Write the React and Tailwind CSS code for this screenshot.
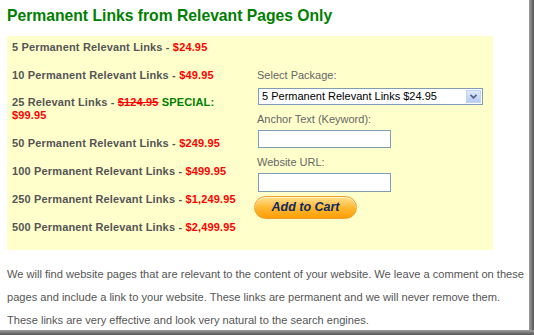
import React from "react";

const items = [
  { label: "5 Permanent Relevant Links", price: "$24.95" },
  { label: "10 Permanent Relevant Links", price: "$49.95" },
  { special: true },
  { label: "50 Permanent Relevant Links", price: "$249.95" },
  { label: "100 Permanent Relevant Links", price: "$499.95" },
  { label: "250 Permanent Relevant Links", price: "$1,249.95" },
  { label: "500 Permanent Relevant Links", price: "$2,499.95" },
];

export default function App() {
  return (
    <div className="w-[534px] h-[335px] flex flex-col bg-white font-['Liberation_Sans',Arial,sans-serif] overflow-hidden">
      <div className="flex flex-1 min-h-0">
        <div className="w-[529px] px-[7px] pt-[7px] overflow-hidden">
          <h1 className="text-[15.7px] leading-[18px] font-bold text-[#008000]">
            Permanent Links from Relevant Pages Only
          </h1>
          <div className="mt-[11px] w-[486px] h-[214px] bg-[#ffffcc] flex">
            <div className="w-[243px] shrink-0 pl-[5px] pt-[4px] flex flex-col gap-[14px] text-[11px] font-bold text-[#555555] tracking-[0.15px]">
              {items.map((it, i) =>
                it.special ? (
                  <div key={i} className="leading-[13px]">
                    25 Relevant Links - <span className="text-[#ff0000] line-through">$124.95</span>{" "}
                    <span className="text-[#008000]">SPECIAL:</span>{" "}
                    <span className="text-[#ff0000]">$99.95</span>
                  </div>
                ) : (
                  <div key={i} className="leading-[14px]">
                    {it.label} - <span className="text-[#ff0000]">{it.price}</span>
                  </div>
                )
              )}
            </div>
            <div className="flex-1 pl-[7px] pt-[33px] flex flex-col items-start text-[11px] text-[#666666]">
              <div className="leading-[13px]">Select Package:</div>
              <div className="mt-[6px] ml-[1px] w-[225px] h-[17px] bg-white border border-[#7f9db9] flex items-center">
                <span className="flex-1 pl-[3px] text-black text-[11px] leading-[13px]">
                  5 Permanent Relevant Links $24.95
                </span>
                <span className="w-[15px] h-[13px] mr-[1px] bg-gradient-to-b from-[#dfe9fb] to-[#b7cbf2] border border-[#c3d3f5] flex items-center justify-center">
                  <svg width="7" height="5" viewBox="0 0 7 5">
                    <path d="M0.5 0.8 L3.5 3.8 L6.5 0.8" fill="none" stroke="#4d6185" strokeWidth="1.6" />
                  </svg>
                </span>
              </div>
              <div className="mt-[8px] leading-[13px]">Anchor Text (Keyword):</div>
              <div className="mt-[4px] ml-[1px] w-[133px] h-[18px] bg-white border border-[#7f9db9]" />
              <div className="mt-[8px] leading-[13px]">Website URL:</div>
              <div className="mt-[4px] ml-[1px] w-[133px] h-[19px] bg-white border border-[#7f9db9]" />
              <div className="mt-[4px] -ml-[3px] w-[103px] h-[23px] rounded-full border border-[#f0a030] bg-gradient-to-b from-[#ffe08a] via-[#ffb92e] to-[#ff9d00] flex items-center justify-center shadow-[inset_0_1px_0_#fff3c4]">
                <span className="text-[12.5px] font-bold italic text-[#0c2a66] leading-none">Add to Cart</span>
              </div>
            </div>
          </div>
          <p className="mt-[13px] w-[521px] text-[11.1px] leading-[23px] text-[#555555]">
            We will find website pages that are relevant to the content of your website. We leave a comment on these pages and include a link to your website. These links are permanent and we will never remove them. These links are very effective and look very natural to the search engines.
          </p>
        </div>
        <div className="w-[5px] bg-gradient-to-r from-[#a0a0a0] to-[#555555]" />
      </div>
      <div className="h-[5px] bg-gradient-to-b from-[#a0a0a0] to-[#555555]" />
    </div>
  );
}
